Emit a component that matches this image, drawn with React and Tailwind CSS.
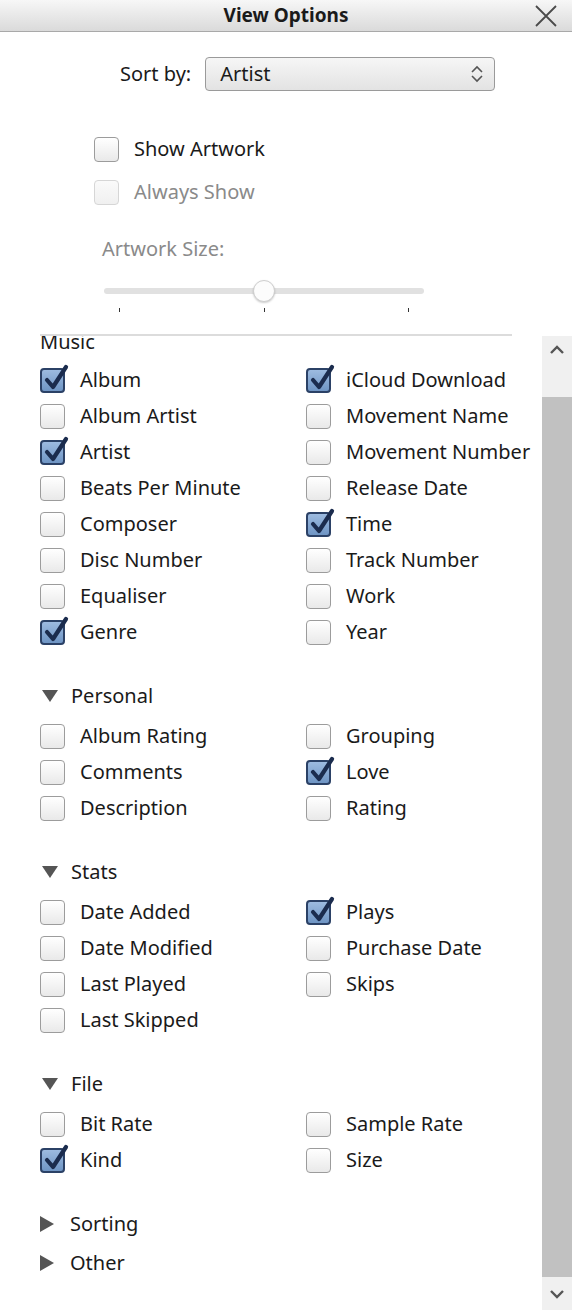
import React from "react";

const font = { fontFamily: '"Noto Sans", "Open Sans", sans-serif' };

const sections = [
  {
    title: "Personal",
    items: [
      ["Album Rating", false],
      ["Grouping", false],
      ["Comments", false],
      ["Love", true],
      ["Description", false],
      ["Rating", false],
    ],
  },
  {
    title: "Stats",
    items: [
      ["Date Added", false],
      ["Plays", true],
      ["Date Modified", false],
      ["Purchase Date", false],
      ["Last Played", false],
      ["Skips", false],
      ["Last Skipped", false],
    ],
  },
  {
    title: "File",
    items: [
      ["Bit Rate", false],
      ["Sample Rate", false],
      ["Kind", true],
      ["Size", false],
    ],
  },
];

const music = [
  ["Album", true],
  ["iCloud Download", true],
  ["Album Artist", false],
  ["Movement Name", false],
  ["Artist", true],
  ["Movement Number", false],
  ["Beats Per Minute", false],
  ["Release Date", false],
  ["Composer", false],
  ["Time", true],
  ["Disc Number", false],
  ["Track Number", false],
  ["Equaliser", false],
  ["Work", false],
  ["Genre", true],
  ["Year", false],
];

const Box = ({ checked, disabled }) => {
  if (checked) {
    return (
      <span className="relative block w-[25px] h-[25px] shrink-0 rounded-[4px] border-2 border-[#2b4166] bg-gradient-to-b from-[#9dbbe0] to-[#6f95c4]">
        <svg className="absolute left-[2px] -top-[6px]" width="26" height="28" viewBox="0 0 26 28">
          <path d="M3 16 L9 23 L22 3" fill="none" stroke="#1b2c4e" strokeWidth="4.2" strokeLinecap="round" strokeLinejoin="round" />
        </svg>
      </span>
    );
  }
  return (
    <span
      className={
        "block w-[25px] h-[25px] shrink-0 rounded-[4px] border bg-gradient-to-b " +
        (disabled
          ? "border-[#d6d6d6] from-[#fafafa] to-[#f0f0f0]"
          : "border-[#9c9c9c] from-[#ffffff] to-[#e9e9e9]")
      }
    />
  );
};

const Row = ({ label, checked }) => (
  <div className="h-9 flex items-center gap-[15px]">
    <Box checked={checked} />
    <span className="text-[20px] text-[#1a1a1a] leading-none">{label}</span>
  </div>
);

const Grid = ({ items }) => (
  <div className="grid grid-cols-[266px_1fr]">
    {items.map(([label, checked]) => (
      <Row key={label} label={label} checked={checked} />
    ))}
  </div>
);

const Header = ({ title, open = true }) => (
  <div className="h-6 flex items-center gap-[12px] text-[20px] text-[#1a1a1a]">
    {open ? (
      <svg width="18" height="14" viewBox="0 0 18 14" className="ml-[1px]">
        <path d="M1 1 L17 1 L9 13 Z" fill="#555" />
      </svg>
    ) : (
      <svg width="16" height="16" viewBox="0 0 16 16" className="mr-[2px]">
        <path d="M0 0 L14 8 L0 16 Z" fill="#555" />
      </svg>
    )}
    <span>{title}</span>
  </div>
);

export default function App() {
  return (
    <div className="w-[572px] h-[1310px] bg-white flex flex-col overflow-hidden" style={font}>
      <div className="h-8 shrink-0 relative flex items-center justify-center bg-gradient-to-b from-[#f7f7f7] to-[#dadada] border-b border-[#a9a9a9]">
        <span className="text-[19px] font-bold text-[#1a1a1a]">View Options</span>
        <svg className="absolute right-[14px] top-[4px]" width="24" height="24" viewBox="0 0 24 24">
          <path d="M2 2 L22 22 M22 2 L2 22" stroke="#4a4a4a" strokeWidth="1.8" />
        </svg>
      </div>

      <div className="shrink-0 pt-[25px]">
        <div className="flex items-center ml-[120px] gap-[14px]">
          <span className="text-[20px] text-[#1a1a1a]">Sort by:</span>
          <div className="w-[290px] h-[34px] rounded-[4px] border border-[#9a9a9a] bg-gradient-to-b from-[#f6f6f6] to-[#e3e3e3] flex items-center justify-between pl-[14px] pr-[10px]">
            <span className="text-[20px] text-[#1a1a1a]">Artist</span>
            <svg width="14" height="20" viewBox="0 0 14 20">
              <path d="M2 8 L7 3 L12 8 M2 12 L7 17 L12 12" fill="none" stroke="#555" strokeWidth="1.6" />
            </svg>
          </div>
        </div>

        <div className="ml-[94px] mt-[40px] flex flex-col gap-[7px]">
          <div className="h-9 flex items-center gap-[15px]">
            <Box />
            <span className="text-[20px] text-[#1a1a1a]">Show Artwork</span>
          </div>
          <div className="h-9 flex items-center gap-[15px]">
            <Box disabled />
            <span className="text-[20px] text-[#8a8a8a]">Always Show</span>
          </div>
        </div>

        <div className="ml-[102px] mt-[27px] text-[20px] text-[#8a8a8a] h-6 flex items-center">Artwork Size:</div>

        <div className="ml-[104px] mt-[27px] w-[320px]">
          <div className="relative h-[6px] rounded-full bg-[#e1e1e1]">
            <span className="absolute left-[149px] -top-[8px] w-[22px] h-[22px] rounded-full bg-[#fcfcfc] border border-[#cfcfcf] shadow-[0_1px_2px_rgba(0,0,0,0.2)]" />
          </div>
          <div className="flex justify-between px-[15px] mt-[14px]">
            <span className="w-px h-[4px] bg-[#333]" />
            <span className="w-px h-[4px] bg-[#333]" />
            <span className="w-px h-[4px] bg-[#333]" />
          </div>
        </div>

        <div className="ml-[40px] mt-[22px] w-[472px] h-[2px] bg-[#dcdcdc]" />
      </div>

      <div className="flex-1 flex min-h-0">
        <div className="flex-1 overflow-hidden pl-[40px]">
          <div className="-mt-[6px]">
            <div className="h-6 flex items-center text-[20px] text-[#1a1a1a]">Music</div>
            <div className="mt-[8px]">
              <Grid items={music} />
            </div>
            {sections.map((s) => (
              <div key={s.title} className="mt-[34px]">
                <Header title={s.title} />
                <div className="mt-[10px]">
                  <Grid items={s.items} />
                </div>
              </div>
            ))}
            <div className="mt-[34px] flex flex-col gap-[15px]">
              <Header title="Sorting" open={false} />
              <Header title="Other" open={false} />
            </div>
          </div>
        </div>

        <div className="w-[30px] shrink-0 bg-[#f0f0f0] flex flex-col">
          <div className="h-[61px] flex justify-center pt-[8px]">
            <svg width="16" height="12" viewBox="0 0 16 12">
              <path d="M2 9 L8 3 L14 9" fill="none" stroke="#555" strokeWidth="2.4" />
            </svg>
          </div>
          <div className="flex-1 bg-[#c1c1c1]" />
          <div className="h-[33px] flex justify-center items-center">
            <svg width="16" height="12" viewBox="0 0 16 12">
              <path d="M2 3 L8 9 L14 3" fill="none" stroke="#555" strokeWidth="2.4" />
            </svg>
          </div>
        </div>
      </div>
    </div>
  );
}
